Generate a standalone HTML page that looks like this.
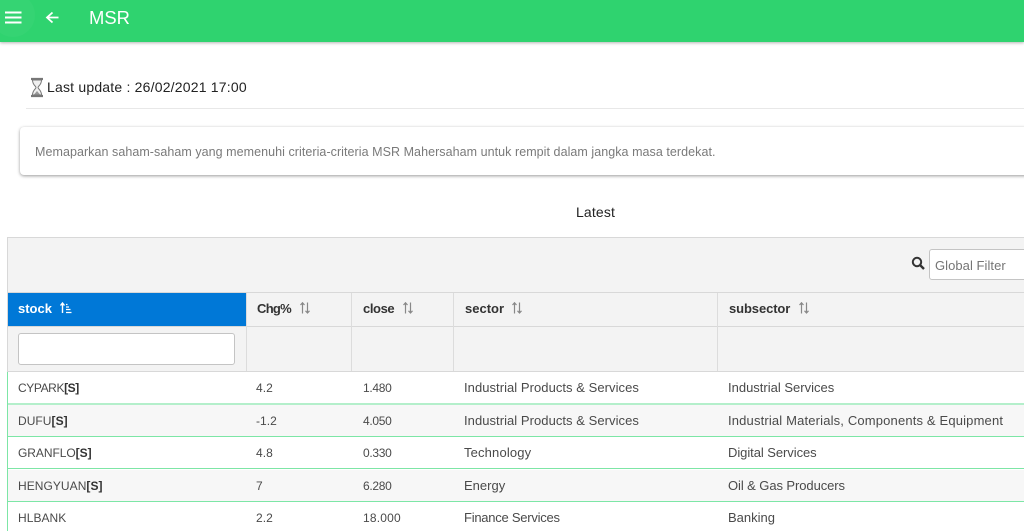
<!DOCTYPE html>
<html><head><meta charset="utf-8">
<style>
html,body{margin:0;padding:0;width:1024px;height:531px;overflow:hidden;background:#fff}
.a{position:absolute;white-space:nowrap}
.r{font-family:"Liberation Sans",sans-serif}
.o{font-family:"Liberation Sans",sans-serif;font-size:13px;color:#4a4a4a;line-height:16px}
.n{font-size:12px;letter-spacing:.05px}
.h{font-weight:bold;color:#333;font-family:"Liberation Sans",sans-serif;font-size:13px;line-height:16px}
.b{position:absolute}
b{color:#333}
</style></head><body>
<div class="b" style="left:0;top:0;width:1024px;height:42px;background:#2fd36f;box-shadow:0 1px 3px rgba(0,0,0,.3)"></div>
<div class="b" style="left:-9px;top:-7px;width:44px;height:44px;border-radius:22px;background:#35d473"></div>
<svg class="b" style="left:0;top:0" width="70" height="40"><path d="M5 12.500H21.500M5 17.500H21.500M5 22.500H21.500" stroke="#fff" stroke-width="2"/><path d="M58.500 17.500H47.500M52.500 12.500L47 17.500L52.500 22.500" stroke="#fff" stroke-width="1.800" fill="none"/></svg>
<div class="a r" style="left:89px;top:7px;font-size:18.400px;line-height:21px;color:#fff">MSR</div>

<svg class="b" style="left:29px;top:77px" width="16" height="21"><path d="M2 2H14M2 19H14" stroke="#777" stroke-width="2.200"/><path d="M3.500 3C3.500 8 7 9 7 10.500C7 12 3.500 13 3.500 18H12.500C12.500 13 9 12 9 10.500C9 9 12.500 8 12.500 3Z" fill="#f0f0f0" stroke="#777" stroke-width="1"/><path d="M5 17.500L8 14L11 17.500Z" fill="#999"/></svg>
<div class="a r" style="left:47px;top:78px;font-size:14px;letter-spacing:.2px;line-height:18px;color:#222">Last update : 26/02/2021 17:00</div>
<div class="b" style="left:26px;top:108px;width:998px;height:1px;background:#e8e8e8"></div>

<div class="b" style="left:20px;top:127px;width:1010px;height:48px;background:#fff;border-radius:4px;box-shadow:0 1px 3px rgba(0,0,0,.4)"></div>
<div class="a r" style="left:35px;top:144px;font-size:12.500px;letter-spacing:.054px;line-height:16px;color:#7a7a7a">Memaparkan saham-saham yang memenuhi criteria-criteria MSR Mahersaham untuk rempit dalam jangka masa terdekat.</div>

<div class="a r" style="left:576px;top:203px;font-size:14px;letter-spacing:.15px;line-height:18px;color:#222">Latest</div>

<div class="b" style="left:7px;top:237px;width:1017px;height:135px;background:#f3f3f3"></div>
<div class="b" style="left:7px;top:237px;width:1017px;height:1px;background:#d8d8d8"></div>
<div class="b" style="left:7px;top:237px;width:1px;height:135px;background:#d8d8d8"></div>
<div class="b" style="left:7px;top:292px;width:1017px;height:1px;background:#d8d8d8"></div>
<div class="b" style="left:7px;top:326px;width:1017px;height:1px;background:#d8d8d8"></div>
<div class="b" style="left:7px;top:371px;width:1017px;height:1px;background:#d8d8d8"></div>
<div class="b" style="left:246px;top:293px;width:1px;height:78px;background:#dcdcdc"></div>
<div class="b" style="left:351px;top:293px;width:1px;height:78px;background:#dcdcdc"></div>
<div class="b" style="left:453px;top:293px;width:1px;height:78px;background:#dcdcdc"></div>
<div class="b" style="left:717px;top:293px;width:1px;height:78px;background:#dcdcdc"></div>
<div class="b" style="left:8px;top:293px;width:238px;height:33px;background:#0078d7"></div>

<svg class="b" style="left:911px;top:256px" width="15" height="15"><circle cx="6" cy="6" r="4.200" fill="none" stroke="#333" stroke-width="2"/><path d="M9 9L13 13" stroke="#333" stroke-width="2.400"/></svg>
<div class="b" style="left:929px;top:249px;width:110px;height:31px;box-sizing:border-box;background:#fff;border:1px solid #c4c4c4;border-radius:3px"></div>
<div class="a o" style="left:935px;top:258px;color:#757575;letter-spacing:.05px">Global Filter</div>

<div class="a h" style="left:18px;top:301px;color:#fff">stock</div>
<svg class="b" style="left:59px;top:301px" width="14" height="14"><path d="M3.500 12V2.500M1.500 4.500L3.500 2L5.500 4.500" stroke="#fff" stroke-width="1.400" fill="none"/><path d="M7 3.500H8.500M7 6H10M7 8.500H11.500M7 11.500H12.500" stroke="#fff" stroke-width="1.300"/></svg>
<div class="a h" style="left:257px;top:301px;letter-spacing:-.7px">Chg%</div>
<div class="a h" style="left:363px;top:301px;letter-spacing:-.4px">close</div>
<div class="a h" style="left:465px;top:301px">sector</div>
<div class="a h" style="left:729px;top:301px;letter-spacing:-.1px">subsector</div>
<svg class="b" style="left:299px;top:301px" width="12" height="14"><path d="M3.500 12.500V2M1.500 4L3.500 1.800L5.500 4M8.500 1.500V12M6.500 9.800L8.500 12L10.500 9.800" stroke="#888" stroke-width="1.200" fill="none"/></svg>
<svg class="b" style="left:402px;top:301px" width="12" height="14"><path d="M3.500 12.500V2M1.500 4L3.500 1.800L5.500 4M8.500 1.500V12M6.500 9.800L8.500 12L10.500 9.800" stroke="#888" stroke-width="1.200" fill="none"/></svg>
<svg class="b" style="left:511px;top:301px" width="12" height="14"><path d="M3.500 12.500V2M1.500 4L3.500 1.800L5.500 4M8.500 1.500V12M6.500 9.800L8.500 12L10.500 9.800" stroke="#888" stroke-width="1.200" fill="none"/></svg>
<svg class="b" style="left:798px;top:301px" width="12" height="14"><path d="M3.500 12.500V2M1.500 4L3.500 1.800L5.500 4M8.500 1.500V12M6.500 9.800L8.500 12L10.500 9.800" stroke="#888" stroke-width="1.200" fill="none"/></svg>

<div class="b" style="left:18px;top:333px;width:217px;height:32px;box-sizing:border-box;background:#fff;border:1px solid #c4c4c4;border-radius:3px"></div>

<div class="b" style="left:8px;top:405px;width:1016px;height:31px;background:#f7f7f7"></div>
<div class="b" style="left:8px;top:470px;width:1016px;height:31px;background:#f7f7f7"></div>
<div class="b" style="left:7px;top:372px;width:1px;height:159px;background:#7de6a6"></div>
<div class="b" style="left:8px;top:403px;width:1016px;height:2px;background:#b4efcb"></div>
<div class="b" style="left:8px;top:436px;width:1016px;height:1px;background:#7de6a6"></div>
<div class="b" style="left:8px;top:468px;width:1016px;height:1px;background:#7de6a6"></div>
<div class="b" style="left:8px;top:501px;width:1016px;height:1px;background:#7de6a6"></div>

<div class="a o n" style="left:18px;top:380px;letter-spacing:-.4px">CYPARK<b>[S]</b></div>
<div class="a o n" style="left:256px;top:380px">4.2</div>
<div class="a o n" style="left:363px;top:380px;letter-spacing:-.3px">1.480</div>
<div class="a o" style="left:464px;top:380px;letter-spacing:.05px">Industrial Products &amp; Services</div>
<div class="a o" style="left:728px;top:380px">Industrial Services</div>

<div class="a o n" style="left:18px;top:413px">DUFU<b>[S]</b></div>
<div class="a o n" style="left:256px;top:413px">-1.2</div>
<div class="a o n" style="left:363px;top:413px;letter-spacing:-.3px">4.050</div>
<div class="a o" style="left:464px;top:413px;letter-spacing:.05px">Industrial Products &amp; Services</div>
<div class="a o" style="left:728px;top:413px;letter-spacing:.16px">Industrial Materials, Components &amp; Equipment</div>

<div class="a o n" style="left:18px;top:445px;letter-spacing:-.05px">GRANFLO<b>[S]</b></div>
<div class="a o n" style="left:256px;top:445px">4.8</div>
<div class="a o n" style="left:363px;top:445px;letter-spacing:-.3px">0.330</div>
<div class="a o" style="left:464px;top:445px;letter-spacing:.15px">Technology</div>
<div class="a o" style="left:728px;top:445px;letter-spacing:-.06px">Digital Services</div>

<div class="a o n" style="left:18px;top:478px">HENGYUAN<b>[S]</b></div>
<div class="a o n" style="left:256px;top:478px">7</div>
<div class="a o n" style="left:363px;top:478px;letter-spacing:-.3px">6.280</div>
<div class="a o" style="left:464px;top:478px">Energy</div>
<div class="a o" style="left:728px;top:478px;letter-spacing:-.08px">Oil &amp; Gas Producers</div>

<div class="a o n" style="left:18px;top:510px">HLBANK</div>
<div class="a o n" style="left:256px;top:510px">2.2</div>
<div class="a o n" style="left:363px;top:510px;letter-spacing:.2px">18.000</div>
<div class="a o" style="left:464px;top:510px;letter-spacing:-.25px">Finance Services</div>
<div class="a o" style="left:728px;top:510px">Banking</div>
</body></html>
